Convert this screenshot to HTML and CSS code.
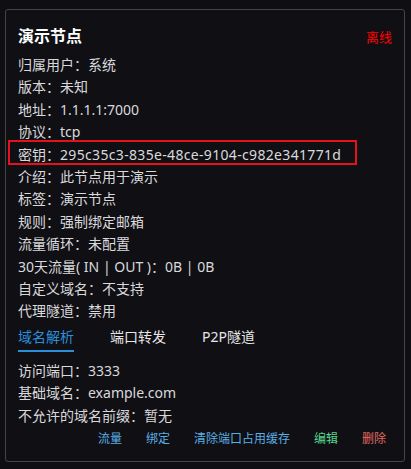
FILE: index.html
```html
<!DOCTYPE html>
<html lang="zh-CN">
<head>
    <meta charset="UTF-8">
    <meta name="viewport" content="width=device-width, initial-scale=1.0">
    <title>演示节点</title>
    <link rel="stylesheet" href="styles.css">
</head>
<body>
    <!-- Node card -->
    <div class="node-card">
        <div class="card-header">
            <h2>演示节点</h2>
            <span class="status offline">离线</span>
        </div>

        <div class="info-list">
            <div class="info-row">归属用户：系统</div>
            <div class="info-row">版本：未知</div>
            <div class="info-row">地址：1.1.1.1:7000</div>
            <div class="info-row">协议：tcp</div>
            <div class="info-row"><span class="marked">密钥：<span class="secret">295c35c3-835e-48ce-9104-c982e341771d</span></span></div>
            <div class="info-row">介绍：此节点用于演示</div>
            <div class="info-row">标签：演示节点</div>
            <div class="info-row">规则：强制绑定邮箱</div>
            <div class="info-row">流量循环：未配置</div>
            <div class="info-row">30天流量( IN | OUT )：0B | 0B</div>
            <div class="info-row">自定义域名：不支持</div>
            <div class="info-row">代理隧道：禁用</div>
        </div>

        <div class="tabs">
            <span class="tab active">域名解析</span>
            <span class="tab">端口转发</span>
            <span class="tab">P2P隧道</span>
        </div>

        <div class="info-list">
            <div class="info-row">访问端口：3333</div>
            <div class="info-row">基础域名：example.com</div>
            <div class="info-row">不允许的域名前缀：暂无</div>
        </div>

        <div class="actions">
            <a href="#" class="link-info">流量</a>
            <a href="#" class="link-info">绑定</a>
            <a href="#" class="link-info">清除端口占用缓存</a>
            <a href="#" class="link-success">编辑</a>
            <a href="#" class="link-danger">删除</a>
        </div>
    </div>
</body>
</html>
```

FILE: styles.css
```css
body {
    margin: 0;
    padding: 9px 6px 6px 5px;
    background-color: #0f0f13;
    font-family: "Noto Sans", "Noto Sans CJK SC", sans-serif;
    font-size: 14px;
    color: #d9d9dc;
}

.node-card {
    background-color: #101014;
    border: 1px solid #44444a;
    border-radius: 3px;
    padding: 16px 17px 11px 12px;
}

.card-header {
    display: flex;
    justify-content: space-between;
    align-items: center;
    margin-bottom: 8px;
}

.card-header h2 {
    margin: 0;
    font-size: 16px;
    line-height: 20px;
    font-weight: bold;
    color: #ffffff;
}

.status {
    font-size: 13px;
    margin-right: -5px;
}

.status.offline {
    color: #ff0000;
}

.info-row {
    line-height: 22.4px;
    white-space: nowrap;
}

.secret {
    letter-spacing: 0.33px;
}

.marked {
    position: relative;
}

.marked::after {
    content: "";
    position: absolute;
    top: -5px;
    left: -10px;
    right: -16px;
    bottom: -1px;
    border: 2px solid #e3121b;
}

.tabs {
    display: flex;
    gap: 36px;
    margin-top: 3px;
    margin-bottom: 8px;
}

.tab {
    line-height: 22px;
    padding-bottom: 2px;
    border-bottom: 2px solid transparent;
    color: #e6e6e8;
}

.tab.active {
    color: #2b8fdc;
    border-bottom-color: #2b8fdc;
}

.actions {
    display: flex;
    justify-content: flex-end;
    gap: 24px;
    font-size: 12px;
    line-height: 22px;
    margin-top: 1px;
    margin-right: 1px;
}

.actions a {
    text-decoration: none;
}

.link-info {
    color: #5aaee6;
}

.link-success {
    color: #56d48e;
}

.link-danger {
    color: #e46a62;
}
```
